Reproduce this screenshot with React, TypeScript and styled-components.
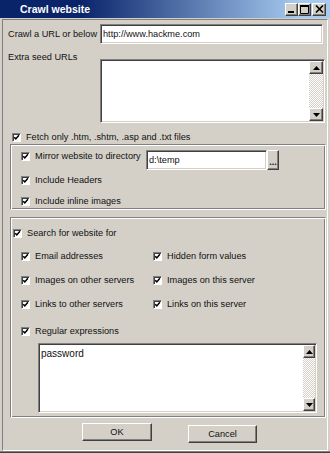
import React from "react";
import styled, { createGlobalStyle, css } from "styled-components";

const Global = createGlobalStyle`
  html, body { margin: 0; padding: 0; background: #d4d0c8; }
  body {
    font-family: "Liberation Sans", Arial, sans-serif;
    font-size: 9.2px;
    color: #111;
  }
  * { box-sizing: border-box; }
`;

const raised = css`
  background: #d4d0c8;
  border: 1px solid;
  border-color: #fff #404040 #404040 #fff;
  box-shadow: inset -1px -1px #808080;
`;

const sunken = css`
  border: 1px solid;
  border-color: #808080 #fff #fff #808080;
  box-shadow: inset 1px 1px #404040, inset -1px -1px #d4d0c8;
`;

const Window = styled.div`
  width: 330px;
  height: 453px;
  display: flex;
  flex-direction: column;
  background: #d4d0c8;
  overflow: hidden;
  box-shadow: inset 0 -1px #404040, inset 0 -2px #808080;
`;

const TitleBar = styled.div`
  height: 18px;
  flex: none;
  display: flex;
  align-items: center;
  padding: 0 4px 0 20px;
  background: linear-gradient(to right, #0a246a 0, #0a246a 80px, #a6caf0 300px, #a6caf0 100%);
  color: #fff;
  font-weight: bold;
  font-size: 10.5px;
`;

const Title = styled.div`
  flex: 1;
`;

const TitleButtons = styled.div`
  display: flex;
  align-items: center;
`;

const TitleButton = styled.div<{ $w: number; $gap?: number }>`
  ${raised};
  width: ${(p) => p.$w}px;
  height: 13px;
  margin-left: ${(p) => p.$gap ?? 0}px;
  display: flex;
  align-items: center;
  justify-content: center;
`;

const Client = styled.div`
  flex: 1;
  margin: 1px 2px 2px 2px;
  border: 1px solid;
  border-color: #808080 #fff #fff #808080;
  display: flex;
  flex-direction: column;
`;

const FieldRow = styled.div`
  display: flex;
  align-items: center;
  margin-top: 4px;
  padding-left: 5px;
  height: 20px;
`;

const AreaRow = styled.div`
  display: flex;
  align-items: flex-start;
  margin-top: 8px;
  padding-left: 5px;
`;

const Label = styled.div`
  width: 92px;
  line-height: 11px;
  white-space: nowrap;
`;

const Field = styled.div<{ $w: number }>`
  ${sunken};
  width: ${(p) => p.$w}px;
  height: 20px;
  background: #fff;
  padding-left: 2px;
  display: flex;
  align-items: center;
  white-space: nowrap;
`;

const TextBox = styled.div<{ $w: number; $h: number; $top: number; $left?: number }>`
  ${sunken};
  width: ${(p) => p.$w}px;
  height: ${(p) => p.$h}px;
  margin-top: ${(p) => p.$top}px;
  margin-left: ${(p) => p.$left ?? 0}px;
  background: #fff;
  padding: 1px;
  display: flex;
`;

const TextContent = styled.div`
  flex: 1;
  padding: 3px 0 0 1px;
  line-height: 12px;
  font-size: 10px;
`;

const Scroll = styled.div<{ $w: number }>`
  width: ${(p) => p.$w}px;
  display: flex;
  flex-direction: column;
`;

const ScrollBtn = styled.div`
  ${raised};
  height: 13px;
  flex: none;
  display: flex;
  align-items: center;
  justify-content: center;
`;

const Track = styled.div`
  flex: 1;
  background: repeating-conic-gradient(#fff 0 25%, #d4d0c8 0 50%) 0 0 / 2px 2px;
`;

const CheckRow = styled.div<{ $indent?: number; $top?: number; $w?: number }>`
  display: flex;
  align-items: center;
  gap: 5px;
  height: 12px;
  padding-left: ${(p) => p.$indent ?? 0}px;
  margin-top: ${(p) => p.$top ?? 0}px;
  width: ${(p) => (p.$w ? `${p.$w}px` : "auto")};
  white-space: nowrap;
  flex: none;
`;

const Box = styled.div`
  width: 9px;
  height: 9px;
  flex: none;
  border: 1px solid;
  border-color: #808080 #fff #fff #808080;
  box-shadow: inset 1px 1px #404040;
  background: #fff;
  display: flex;
`;

const Group = styled.div<{ $top: number; $pt: number; $pb: number }>`
  margin: ${(p) => p.$top}px 1px 0 7px;
  border: 1px solid;
  border-color: #808080 #fff #fff #808080;
  box-shadow: inset 1px 1px #fff, inset -1px -1px #808080;
  padding: ${(p) => p.$pt}px 0 ${(p) => p.$pb}px 0;
  display: flex;
  flex-direction: column;
`;

const MirrorRow = styled.div`
  display: flex;
  align-items: flex-start;
  padding-left: 10px;
`;

const DotsBtn = styled.div`
  ${raised};
  width: 12px;
  height: 20px;
  display: flex;
  align-items: flex-end;
  justify-content: center;
  line-height: 10px;
  padding-bottom: 2px;
  font-weight: bold;
`;

const OptionGrid = styled.div`
  display: grid;
  grid-template-columns: 132px auto;
  row-gap: 12px;
  margin-top: 11px;
  padding-left: 10px;
`;

const ButtonRow = styled.div`
  display: flex;
  align-items: flex-start;
  margin-top: 5px;
  padding-left: 79px;
`;

const PushButton = styled.div<{ $w: number; $gap?: number; $top?: number }>`
  ${raised};
  width: ${(p) => p.$w}px;
  height: 18px;
  margin-left: ${(p) => p.$gap ?? 0}px;
  margin-top: ${(p) => p.$top ?? 0}px;
  display: flex;
  align-items: center;
  justify-content: center;
`;

const CheckMark = () => (
  <svg width="7" height="7" viewBox="0 0 7 7">
    <path d="M1.2 3.2 L2.8 4.9 L5.9 1.3" fill="none" stroke="#000" strokeWidth="1.6" />
  </svg>
);

const Check: React.FC<{ label: string; indent?: number; top?: number; w?: number }> = ({
  label,
  indent,
  top,
  w,
}) => (
  <CheckRow $indent={indent} $top={top} $w={w}>
    <Box>
      <CheckMark />
    </Box>
    <span>{label}</span>
  </CheckRow>
);

const Arrow: React.FC<{ up?: boolean }> = ({ up }) => (
  <svg width="7" height="4" viewBox="0 0 7 4">
    <path d={up ? "M3.5 0 L7 4 L0 4 Z" : "M0 0 L7 0 L3.5 4 Z"} fill="#000" />
  </svg>
);

const ScrollBar: React.FC<{ w: number }> = ({ w }) => (
  <Scroll $w={w}>
    <ScrollBtn>
      <Arrow up />
    </ScrollBtn>
    <Track />
    <ScrollBtn>
      <Arrow />
    </ScrollBtn>
  </Scroll>
);

export default function App() {
  return (
    <>
      <Global />
      <Window>
        <TitleBar>
          <Title>Crawl website</Title>
          <TitleButtons>
            <TitleButton $w={13}>
              <svg width="9" height="9" viewBox="0 0 9 9">
                <rect x="1" y="6" width="6" height="2" fill="#000" />
              </svg>
            </TitleButton>
            <TitleButton $w={13}>
              <svg width="9" height="9" viewBox="0 0 9 9">
                <path d="M0.5 1.5 H8.5 V8.5 H0.5 Z" fill="none" stroke="#000" strokeWidth="1" />
                <rect x="0" y="0" width="9" height="2" fill="#000" />
              </svg>
            </TitleButton>
            <TitleButton $w={14} $gap={1}>
              <svg width="9" height="8" viewBox="0 0 9 8">
                <path d="M1 0.5 L8 7.5 M8 0.5 L1 7.5" stroke="#000" strokeWidth="1.6" />
              </svg>
            </TitleButton>
          </TitleButtons>
        </TitleBar>
        <Client>
          <FieldRow>
            <Label>Crawl a URL or below</Label>
            <Field $w={223}>http://www.hackme.com</Field>
          </FieldRow>
          <AreaRow>
            <Label>Extra seed URLs</Label>
            <TextBox $w={225} $h={64} $top={7}>
              <TextContent />
              <ScrollBar w={14} />
            </TextBox>
          </AreaRow>
          <Check label="Fetch only .htm, .shtm, .asp and .txt files" indent={9} top={8} />
          <Group $top={1} $pt={5} $pb={2}>
            <MirrorRow>
              <Check label="Mirror website to directory" w={125} />
              <Field $w={121}>d:\temp</Field>
              <DotsBtn>...</DotsBtn>
            </MirrorRow>
            <Check label="Include Headers" indent={10} top={4} />
            <Check label="Include inline images" indent={10} top={9} />
          </Group>
          <Group $top={7} $pt={9} $pb={4}>
            <Check label="Search for website for" indent={2} />
            <OptionGrid>
              <Check label="Email addresses" />
              <Check label="Hidden form values" />
              <Check label="Images on other servers" />
              <Check label="Images on this server" />
              <Check label="Links to other servers" />
              <Check label="Links on this server" />
            </OptionGrid>
            <Check label="Regular expressions" indent={10} top={15} />
            <TextBox $w={279} $h={70} $top={6} $left={27}>
              <TextContent>password</TextContent>
              <ScrollBar w={12} />
            </TextBox>
          </Group>
          <ButtonRow>
            <PushButton $w={70}>OK</PushButton>
            <PushButton $w={69} $gap={36} $top={2}>
              Cancel
            </PushButton>
          </ButtonRow>
        </Client>
      </Window>
    </>
  );
}
